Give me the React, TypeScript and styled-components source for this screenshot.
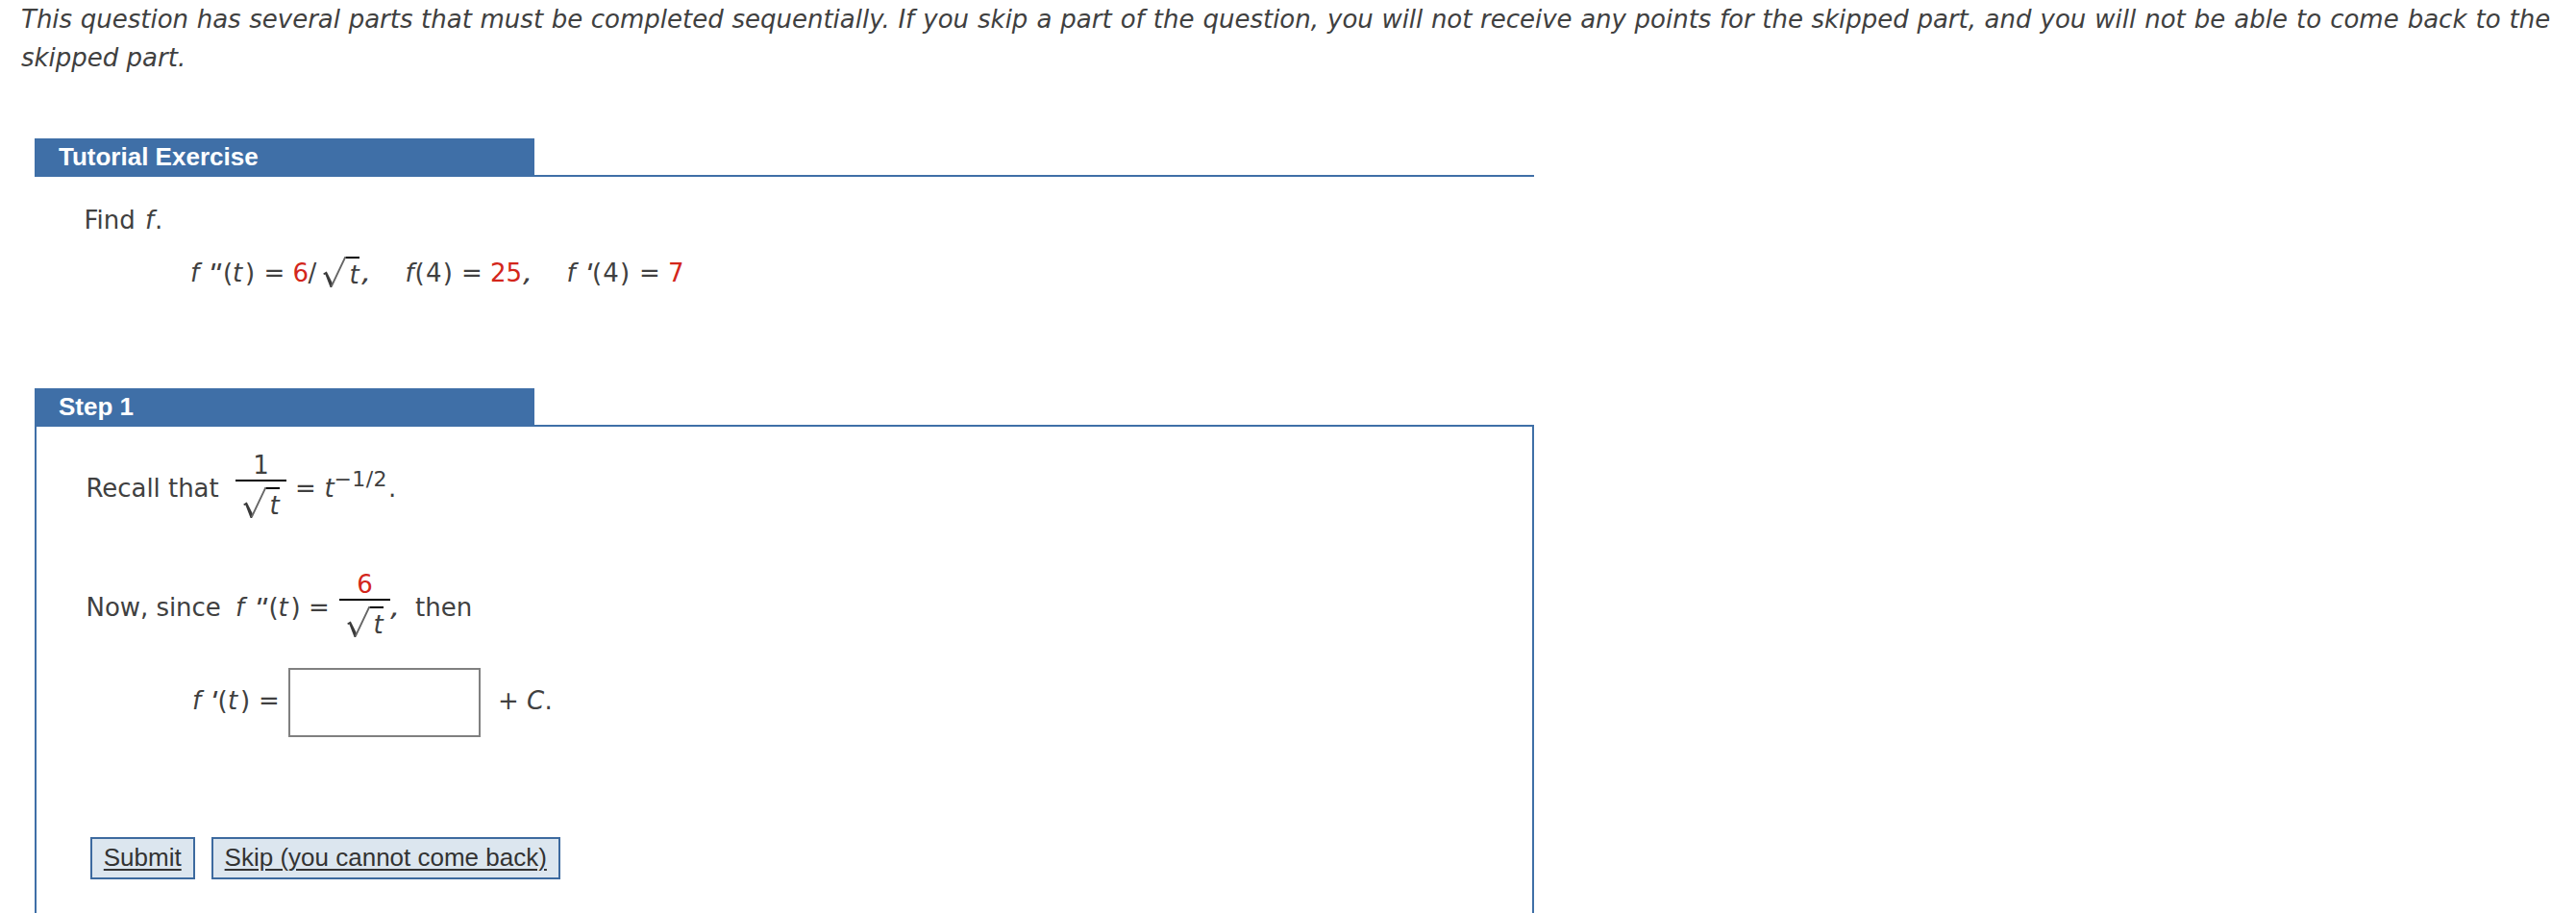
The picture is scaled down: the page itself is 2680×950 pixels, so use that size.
import React from "react";
import styled, { createGlobalStyle } from "styled-components";

const blue = "#3f6fa7";

const GlobalStyle = createGlobalStyle`
  html, body { margin: 0; padding: 0; background: #fff; }
  body { height: 950px; overflow: hidden; }
`;

const Page = styled.main`
  box-sizing: border-box;
  width: 2680px;
  height: 950px;
  overflow: hidden;
  background: #fff;
  color: #404040;
  font: 26px/40px "DejaVu Sans", Verdana, sans-serif;
`;

const Intro = styled.p`
  margin: 0;
  padding-left: 22px;
  height: 144px;
  box-sizing: border-box;
  font-style: italic;
  white-space: nowrap;
`;

const IntroLine = styled.span`
  display: block;
  width: max-content;
`;

const Phrase = styled.span<{ $space: number }>`
  word-spacing: ${(p) => p.$space}px;
`;

const Section = styled.section<{ $height: number }>`
  width: 1560px;
  height: ${(p) => p.$height}px;
  margin-left: 36px;
`;

const Heading = styled.h2`
  box-sizing: border-box;
  width: 520px;
  height: 38px;
  margin: 0;
  padding-left: 25px;
  background: ${blue};
  color: #fff;
  font: bold 26px/38px "Liberation Sans", Arial, sans-serif;
`;

const Body = styled.div<{ $framed?: boolean }>`
  box-sizing: border-box;
  height: calc(100% - 38px);
  border: 0 solid ${blue};
  border-top-width: 2px;
  ${(p) => p.$framed && "border-left-width: 2px; border-right-width: 2px;"}
  padding: ${(p) => (p.$framed ? "20px 0 0 51.5px" : "25px 0 0 51.5px")};
`;

const Row = styled.div<{ $height: number; $indent?: number }>`
  display: flex;
  align-items: flex-start;
  height: ${(p) => p.$height}px;
  padding-left: ${(p) => p.$indent ?? 0}px;
  white-space: pre;
`;

const Term = styled.span<{
  $w: number;
  $drop?: number;
  $italic?: boolean;
  $red?: boolean;
  $tracking?: number;
}>`
  flex: none;
  width: ${(p) => p.$w}px;
  margin-top: ${(p) => p.$drop ?? 0}px;
  font-style: ${(p) => (p.$italic ? "italic" : "normal")};
  letter-spacing: ${(p) => p.$tracking ?? 0}px;
  ${(p) => p.$red && "color: #d3261b;"}
`;

const Prime = styled(Term)`
  transform: skewX(-14deg) scaleX(1.25);
  transform-origin: 0 50%;
`;

const Comma = styled(Term)`
  transform: scaleX(1.25);
  transform-origin: 0 50%;
`;

const Exponent = styled(Term)`
  font-size: 22px;
`;

const RootBox = styled.span<{ $drop: number }>`
  display: flex;
  flex: none;
  height: 32px;
  margin-top: ${(p) => p.$drop}px;
`;

const Radicand = styled.span`
  box-sizing: border-box;
  width: 14px;
  height: 32px;
  padding-left: 3.5px;
  border-top: 2px solid #000;
  font-style: italic;
  line-height: 34px;
`;

const Fraction = styled.span`
  display: flex;
  flex: none;
  flex-direction: column;
  width: 53px;
`;

const Numerator = styled.span<{ $red?: boolean }>`
  height: 35px;
  border-bottom: 2px solid #000;
  text-align: center;
  ${(p) => p.$red && "color: #d3261b;"}
`;

const Denominator = styled.span`
  display: flex;
  padding-left: 8px;
`;

const Answer = styled.input`
  box-sizing: border-box;
  flex: none;
  width: 200px;
  height: 72px;
  margin: 0 18px 0 0;
  border: 2px solid #808080;
  border-radius: 0;
  background: #fff;
  font: inherit;
`;

const Actions = styled.div`
  display: flex;
  gap: 17px;
  padding-left: 4.5px;
`;

const Action = styled.button<{ $w: number }>`
  box-sizing: border-box;
  width: ${(p) => p.$w}px;
  height: 44px;
  padding: 0 0.5px 2px 0;
  border: 2px solid #3d6a9f;
  border-radius: 0;
  background: #dce6ef;
  color: #333;
  font: 26px/38px "Liberation Sans", Arial, sans-serif;
  text-decoration: underline;
  text-decoration-thickness: 2px;
  text-underline-offset: 3px;
  text-decoration-skip-ink: auto;
  white-space: nowrap;
`;

const Root = ({ drop }: { drop: number }) => (
  <RootBox $drop={drop}>
    <svg width="24" height="32" viewBox="0 0 24 32">
      <path d="M0.3 17.4 L3.8 15.6 L9.8 27.5 L9.2 32 L7.6 32 L2.4 18.6 L1 19 Z" fill="#3a3a3a" />
      <path d="M8.8 31 L23 1 L24 1" fill="none" stroke="#666" strokeWidth="1.8" />
    </svg>
    <Radicand>t</Radicand>
  </RootBox>
);

export default function App() {
  return (
    <Page>
      <GlobalStyle />
      <Intro>
        <IntroLine>
          <Phrase $space={0.35}>This question has several parts that must be completed sequentially. </Phrase>
          <Phrase $space={0.75}>If you skip a part of the question, </Phrase>
          <Phrase $space={0.3}>you will not receive any points for the skipped part, </Phrase>
          <Phrase $space={0.75}>and you will not be able to come back to the</Phrase>
        </IntroLine>
        <IntroLine>skipped part.</IntroLine>
      </Intro>

      <Section $height={260}>
        <Heading>Tutorial Exercise</Heading>
        <Body>
          <Row $height={55}>
            <Term $w={63.5}>Find</Term>
            <Term $w={10} $italic>f</Term>
            <Term $w={10}>.</Term>
          </Row>
          <Row $height={60} $indent={110.5}>
            <Term $w={18} $italic>f</Term>
            <Prime $w={16} $italic>"</Prime>
            <Term $w={10}>(</Term>
            <Term $w={13} $italic>t</Term>
            <Term $w={19.5}>)</Term>
            <Term $w={30}>=</Term>
            <Term $w={16} $red>6</Term>
            <Term $w={15.5}>/</Term>
            <Root drop={3} />
            <Term $w={2}> </Term>
            <Comma $w={45.5} $italic>,</Comma>
            <Term $w={10} $italic>f</Term>
            <Term $w={48.5} $tracking={1.3}>(4)</Term>
            <Term $w={30}>=</Term>
            <Term $w={34} $red>25</Term>
            <Comma $w={45.5} $italic>,</Comma>
            <Term $w={18} $italic>f</Term>
            <Prime $w={8.5} $italic>'</Prime>
            <Term $w={49} $tracking={1.1}>(4)</Term>
            <Term $w={30}>=</Term>
            <Term $w={20} $red>7</Term>
          </Row>
        </Body>
      </Section>

      <Section $height={700}>
        <Heading>Step 1</Heading>
        <Body $framed>
          <Row $height={124}>
            <Term $w={155.5} $drop={24} $tracking={-0.05}>Recall that</Term>
            <Fraction>
              <Numerator>1</Numerator>
              <Denominator><Root drop={6} /></Denominator>
            </Fraction>
            <Term $w={9} $drop={24}> </Term>
            <Term $w={30.5} $drop={24}>=</Term>
            <Term $w={10} $drop={24} $italic>t</Term>
            <Exponent $w={56.5} $drop={15} $tracking={0.4}>−1/2</Exponent>
            <Term $w={10} $drop={24}>.</Term>
          </Row>
          <Row $height={107}>
            <Term $w={155.5} $drop={24} $tracking={-0.05}>Now, since</Term>
            <Term $w={19} $drop={24} $italic>f</Term>
            <Prime $w={15.5} $drop={24} $italic>"</Prime>
            <Term $w={10} $drop={24}>(</Term>
            <Term $w={13} $drop={24} $italic>t</Term>
            <Term $w={18.5} $drop={24}>)</Term>
            <Term $w={32} $drop={24}>=</Term>
            <Fraction>
              <Numerator $red>6</Numerator>
              <Denominator><Root drop={6} /></Denominator>
            </Fraction>
            <Comma $w={26} $drop={24} $italic>,</Comma>
            <Term $w={70} $drop={24}>then</Term>
          </Row>
          <Row $height={176} $indent={110.5}>
            <Term $w={18} $drop={14} $italic>f</Term>
            <Prime $w={8.5} $drop={14} $italic>'</Prime>
            <Term $w={10.5} $drop={14}>(</Term>
            <Term $w={13} $drop={14} $italic>t</Term>
            <Term $w={19} $drop={14}>)</Term>
            <Term $w={31} $drop={14}>=</Term>
            <Answer aria-label="Answer" />
            <Term $w={30} $drop={14}>+</Term>
            <Term $w={18.5} $drop={14} $italic>C</Term>
            <Term $w={10} $drop={14}>.</Term>
          </Row>
          <Actions>
            <Action $w={109}>Submit</Action>
            <Action $w={363}>Skip (you cannot come back)</Action>
          </Actions>
        </Body>
      </Section>
    </Page>
  );
}
